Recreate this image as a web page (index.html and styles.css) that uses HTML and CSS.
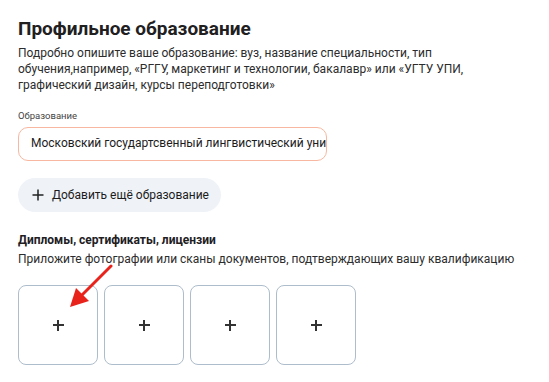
FILE: index.html
```html
<!DOCTYPE html>
<html lang="ru">
<head>
<meta charset="utf-8">
<link rel="stylesheet" href="styles.css">
</head>
<body>
<main class="page">
  <section class="section">
    <h1 class="title">Профильное образование</h1>
    <p class="desc">Подробно опишите ваше образование: вуз, название специальности, тип обучения,например, «РГГУ, маркетинг и технологии, бакалавр» или «УГТУ УПИ, графический дизайн, курсы переподготовки»</p>
  </section>

  <div class="field">
    <label class="label">Образование</label>
    <div class="input">Московский государтсвенный лингвистический университет</div>
  </div>

  <button class="add-btn" type="button">
    <svg class="add-icon" width="12" height="12" viewBox="0 0 12 12"><path d="M6 0.5v11M0.5 6h11" stroke="#222" stroke-width="1.5" fill="none"/></svg>
    <span>Добавить ещё образование</span>
  </button>

  <section class="docs">
    <h2 class="subtitle">Дипломы, сертификаты, лицензии</h2>
    <p class="desc">Приложите фотографии или сканы документов, подтверждающих вашу квалификацию</p>
    <div class="tiles">
      <div class="tile"><span class="plus"></span></div>
      <div class="tile"><span class="plus"></span></div>
      <div class="tile"><span class="plus"></span></div>
      <div class="tile"><span class="plus"></span></div>
      <svg class="arrow" width="60" height="60" viewBox="0 0 60 60">
        <line x1="47" y1="2" x2="18" y2="31" stroke="#e8231b" stroke-width="3" stroke-linecap="round"/>
        <polygon points="6,43 12,24 25,37" fill="#e8231b"/>
      </svg>
    </div>
  </section>
</main>
</body>
</html>
```

FILE: styles.css
```css
* { box-sizing: border-box; }
html, body { margin: 0; padding: 0; background: #fff; }
body {
  font-family: Roboto, "Noto Sans", Arial, sans-serif;
  color: #21201f;
}
.page {
  padding: 16px 18px 0 18px;
  display: flex;
  flex-direction: column;
  align-items: flex-start;
}
.title {
  margin: 0;
  font-size: 19px;
  line-height: 26px;
  font-weight: 700;
}
.desc {
  margin: 3px 0 0 0;
  font-size: 12px;
  line-height: 16px;
  color: #2c2c2c;
  width: 515px;
}
.field {
  margin-top: 17px;
  display: flex;
  flex-direction: column;
}
.label {
  font-size: 9.5px;
  line-height: 12px;
  color: #444;
}
.input {
  margin-top: 5px;
  width: 309px;
  height: 34px;
  border: 1.5px solid #f8b7a0;
  border-radius: 10px;
  padding: 0 12px;
  font-size: 12px;
  line-height: 31px;
  white-space: nowrap;
  overflow: hidden;
  color: #1c1c1c;
}
.add-btn {
  margin-top: 17px;
  height: 34px;
  width: 203px;
  border: none;
  border-radius: 17px;
  background: #eff3f7;
  display: flex;
  align-items: center;
  gap: 8px;
  padding: 0 0 0 14px;
  font-family: inherit;
  font-size: 12px;
  color: #1c1c1c;
  white-space: nowrap;
}
.add-icon { flex: none; }
.docs { margin-top: 20px; }
.subtitle {
  margin: 0;
  font-size: 12px;
  line-height: 17px;
  font-weight: 700;
}
.docs .desc { margin-top: 2px; }
.tiles {
  position: relative;
  margin-top: 18px;
  display: flex;
  gap: 6px;
}
.tile {
  width: 80px;
  height: 80px;
  border: 1px solid #aebdcb;
  border-radius: 8px;
  display: flex;
  align-items: center;
  justify-content: center;
}
.plus {
  position: relative;
  width: 11px;
  height: 11px;
}
.plus::before, .plus::after {
  content: "";
  position: absolute;
  background: #333;
}
.plus::before { left: 0; top: 4.5px; width: 11px; height: 2px; }
.plus::after { left: 4.5px; top: 0; width: 2px; height: 11px; }
.arrow {
  position: absolute;
  left: 46px;
  top: -21px;
}
```
